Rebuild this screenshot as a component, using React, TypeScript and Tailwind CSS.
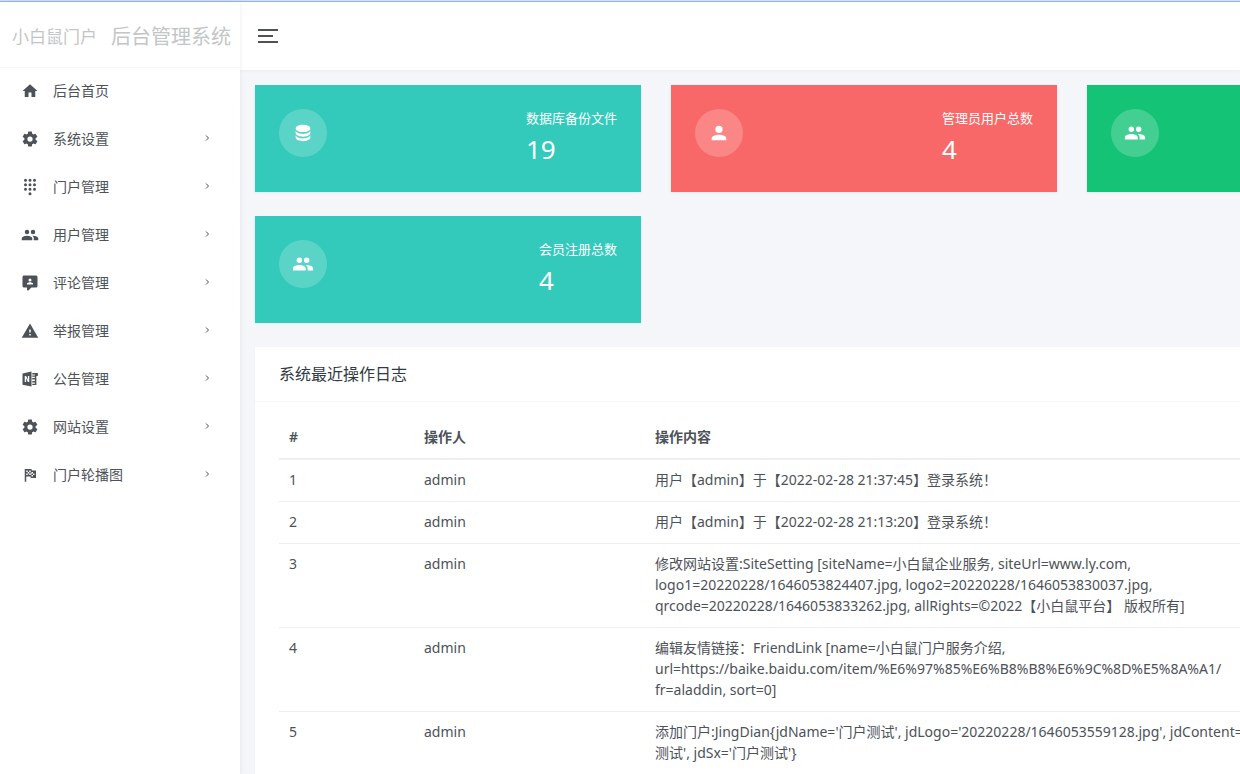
import type { ReactNode } from "react";

// Material Design icon shapes on a 24x24 grid
const icons = {
  home: "M10,20V14H14V20H19V12H22L12,3L2,12H5V20H10Z",
  settings:
    "M12,15.5A3.5,3.5 0 0,1 8.5,12A3.5,3.5 0 0,1 12,8.5A3.5,3.5 0 0,1 15.5,12A3.5,3.5 0 0,1 12,15.5M19.43,12.97C19.47,12.65 19.5,12.33 19.5,12C19.5,11.67 19.47,11.34 19.43,11L21.54,9.37C21.73,9.22 21.78,8.95 21.66,8.73L19.66,5.27C19.54,5.05 19.27,4.96 19.05,5.05L16.56,6.05C16.04,5.66 15.5,5.32 14.87,5.07L14.5,2.42C14.46,2.18 14.25,2 14,2H10C9.75,2 9.54,2.18 9.5,2.42L9.13,5.07C8.5,5.32 7.96,5.66 7.44,6.05L4.95,5.05C4.73,4.96 4.46,5.05 4.34,5.27L2.34,8.73C2.21,8.95 2.27,9.22 2.46,9.37L4.57,11C4.53,11.34 4.5,11.67 4.5,12C4.5,12.33 4.53,12.65 4.57,12.97L2.46,14.63C2.27,14.78 2.21,15.05 2.34,15.27L4.34,18.73C4.46,18.95 4.73,19.03 4.95,18.95L7.44,17.94C7.96,18.34 8.5,18.68 9.13,18.93L9.5,21.58C9.54,21.82 9.75,22 10,22H14C14.25,22 14.46,21.82 14.5,21.58L14.87,18.93C15.5,18.67 16.04,18.34 16.56,17.94L19.05,18.95C19.27,19.03 19.54,18.95 19.66,18.73L21.66,15.27C21.78,15.05 21.73,14.78 21.54,14.63L19.43,12.97Z",
  dialpad:
    "M12,19A2,2 0 0,0 10,21A2,2 0 0,0 12,23A2,2 0 0,0 14,21A2,2 0 0,0 12,19M6,1A2,2 0 0,0 4,3A2,2 0 0,0 6,5A2,2 0 0,0 8,3A2,2 0 0,0 6,1M6,7A2,2 0 0,0 4,9A2,2 0 0,0 6,11A2,2 0 0,0 8,9A2,2 0 0,0 6,7M6,13A2,2 0 0,0 4,15A2,2 0 0,0 6,17A2,2 0 0,0 8,15A2,2 0 0,0 6,13M18,5A2,2 0 0,0 20,3A2,2 0 0,0 18,1A2,2 0 0,0 16,3A2,2 0 0,0 18,5M12,13A2,2 0 0,0 10,15A2,2 0 0,0 12,17A2,2 0 0,0 14,15A2,2 0 0,0 12,13M18,13A2,2 0 0,0 16,15A2,2 0 0,0 18,17A2,2 0 0,0 20,15A2,2 0 0,0 18,13M18,7A2,2 0 0,0 16,9A2,2 0 0,0 18,11A2,2 0 0,0 20,9A2,2 0 0,0 18,7M12,7A2,2 0 0,0 10,9A2,2 0 0,0 12,11A2,2 0 0,0 14,9A2,2 0 0,0 12,7M12,1A2,2 0 0,0 10,3A2,2 0 0,0 12,5A2,2 0 0,0 14,3A2,2 0 0,0 12,1Z",
  users:
    "M16,13C15.71,13 15.38,13 15.03,13.05C16.19,13.89 17,15 17,16.5V19H23V16.5C23,14.17 18.33,13 16,13M8,13C5.67,13 1,14.17 1,16.5V19H15V16.5C15,14.17 10.33,13 8,13M8,11A3,3 0 0,0 11,8A3,3 0 0,0 8,5A3,3 0 0,0 5,8A3,3 0 0,0 8,11M16,11A3,3 0 0,0 19,8A3,3 0 0,0 16,5A3,3 0 0,0 13,8A3,3 0 0,0 16,11Z",
  user: "M12,4A4,4 0 0,1 16,8A4,4 0 0,1 12,12A4,4 0 0,1 8,8A4,4 0 0,1 12,4M12,14C16.42,14 20,15.79 20,18V20H4V18C4,15.79 7.58,14 12,14Z",
  comment:
    "M9,22A1,1 0 0,1 8,21V18H4A2,2 0 0,1 2,16V4C2,2.89 2.9,2 4,2H20A2,2 0 0,1 22,4V16A2,2 0 0,1 20,18H13.9L10.2,21.71C10,21.9 9.75,22 9.5,22H9M16,14V13C16,11.67 13.33,11 12,11C10.67,11 8,11.67 8,13V14H16M12,6A2,2 0 0,0 10,8A2,2 0 0,0 12,10A2,2 0 0,0 14,8A2,2 0 0,0 12,6Z",
  alert: "M13,14H11V10H13M13,18H11V16H13M1,21H23L12,2L1,21Z",
  notebook:
    "M2,4.5L14,2V22L2,19.5V4.5M5,8V16H6.8V11L9.2,16H11V8H9.2V13L6.8,8H5M15,4H22.5V8H20.5V20H15V18.2H18.5V16.5H15V14.5H18.5V12.8H15V10.8H18.5V9H15V7.2H18.5V6H15V4Z",
  flag: "M14.4,6H20V16H13L12.6,14H7V21H5V4H14L14.4,6M14,14H16V12H18V10H16V8H14V10L13,8V6H11V8H9V6H7V8H9V10H7V12H9V10H11V12H13V10L14,12V14M11,10V8H13V10H11M14,10H16V12H14V10Z",
  database:
    "M12,3C7.58,3 4,4.79 4,7C4,9.21 7.58,11 12,11C16.42,11 20,9.21 20,7C20,4.79 16.42,3 12,3M4,9V12C4,14.21 7.58,16 12,16C16.42,16 20,14.21 20,12V9C20,11.21 16.42,13 12,13C7.58,13 4,11.21 4,9M4,14V17C4,19.21 7.58,21 12,21C16.42,21 20,19.21 20,17V14C20,16.21 16.42,18 12,18C7.58,18 4,16.21 4,14Z",
};

type IconName = keyof typeof icons;

function Icon({ name, className }: { name: IconName; className: string }) {
  return (
    <svg viewBox="0 0 24 24" fill="currentColor" fillRule="evenodd" className={className} aria-hidden="true">
      <path d={icons[name]} />
    </svg>
  );
}

const menu: { icon: IconName; label: string; sub?: boolean }[] = [
  { icon: "home", label: "后台首页" },
  { icon: "settings", label: "系统设置", sub: true },
  { icon: "dialpad", label: "门户管理", sub: true },
  { icon: "users", label: "用户管理", sub: true },
  { icon: "comment", label: "评论管理", sub: true },
  { icon: "alert", label: "举报管理", sub: true },
  { icon: "notebook", label: "公告管理", sub: true },
  { icon: "settings", label: "网站设置", sub: true },
  { icon: "flag", label: "门户轮播图", sub: true },
];

const logs = [
  "用户【admin】于【2022-02-28 21:37:45】登录系统！",
  "用户【admin】于【2022-02-28 21:13:20】登录系统！",
  "修改网站设置:SiteSetting [siteName=小白鼠企业服务, siteUrl=www.ly.com,\nlogo1=20220228/1646053824407.jpg, logo2=20220228/1646053830037.jpg,\nqrcode=20220228/1646053833262.jpg, allRights=©2022【小白鼠平台】 版权所有]",
  "编辑友情链接：FriendLink [name=小白鼠门户服务介绍,\nurl=https://baike.baidu.com/item/%E6%97%85%E6%B8%B8%E6%9C%8D%E5%8A%A1/\nfr=aladdin, sort=0]",
  "添加门户:JingDian{jdName='门户测试', jdLogo='20220228/1646053559128.jpg', jdContent='门户\n测试', jdSx='门户测试'}",
];

function Sidebar() {
  return (
    <aside className="relative z-10 w-60 shrink-0 bg-white shadow-[0_1px_5px_rgba(0,0,0,0.08)]">
      <a
        href="#"
        className="flex h-[66px] items-center gap-3.5 border-b border-[#f8f8f8] pt-1 pl-3 whitespace-nowrap text-[#c3c6c6]"
      >
        <span className="text-[17px]">小白鼠门户</span>
        <span className="text-xl">后台管理系统</span>
      </a>
      <nav>
        <ul>
          {menu.map((item) => (
            <li key={item.label}>
              <a href="#" className="flex h-12 items-center pr-7 pb-0.5 pl-[21px] text-sm text-[#4d5259]">
                <Icon name={item.icon} className="mr-3.5 size-[18px]" />
                <span className="flex-1">{item.label}</span>
                {item.sub && (
                  <svg viewBox="0 0 10 10" className="mb-0.5 size-2.5" fill="none" stroke="currentColor" aria-hidden="true">
                    <path d="M4 2.5 L6.5 5 L4 7.5" />
                  </svg>
                )}
              </a>
            </li>
          ))}
        </ul>
      </nav>
    </aside>
  );
}

interface StatCardProps {
  icon: IconName;
  color: string;
  children?: ReactNode;
}

function StatCard({ icon, color, children }: StatCardProps) {
  return (
    <div className={`flex h-[107px] justify-between p-6 text-white shadow-[0_1px_3px_rgba(0,0,0,0.05)] ${color}`}>
      <span className="flex size-12 items-center justify-center rounded-full bg-white/20">
        <Icon name={icon} className="size-[22px]" />
      </span>
      {children}
    </div>
  );
}

function Stat({ label, value }: { label: string; value: number }) {
  return (
    <div>
      <p className="text-[13px] leading-[18px]">{label}</p>
      <p className="text-[26px] leading-[44px]">{value}</p>
    </div>
  );
}

function LogTable() {
  return (
    <section className="bg-white shadow-[0_1px_3px_rgba(0,0,0,0.04)]">
      <header className="flex h-[55px] items-center border-b border-[#f4f5f5] px-6">
        <h4 className="text-base text-[#313944]">系统最近操作日志</h4>
      </header>
      <div className="px-6 pt-3.5 pb-6">
        <table className="w-full table-fixed text-left text-sm leading-[21px]">
          <thead>
            <tr className="h-[43px] border-b-2 border-[#eceeef]">
              <th className="w-[135px] px-2.5 pb-0.5 font-semibold">#</th>
              <th className="w-[231px] px-2.5 pb-0.5 font-semibold">操作人</th>
              <th className="px-2.5 pb-0.5 font-semibold">操作内容</th>
            </tr>
          </thead>
          <tbody>
            {logs.map((text, i) => (
              <tr key={i} className="border-b border-[#eceeef] align-top">
                <td className="px-2.5 pt-[9px] pb-[11px]">{i + 1}</td>
                <td className="px-2.5 pt-[9px] pb-[11px]">admin</td>
                <td className="px-2.5 pt-[9px] pb-[11px] whitespace-pre">{text}</td>
              </tr>
            ))}
          </tbody>
        </table>
      </div>
    </section>
  );
}

export default function App() {
  return (
    <div className="flex h-screen flex-col overflow-hidden bg-[#f5f6fa] font-['Noto_Sans','Noto_Sans_CJK_SC',sans-serif] text-[#4d5259]">
      <div className="h-0.5 shrink-0 border-b border-[#9db3d3] bg-[#cfdff5]" />
      <div className="flex min-h-0 flex-1">
        <Sidebar />
        <div className="min-w-0 flex-1 overflow-hidden">
          <header className="flex h-[68px] items-center bg-white pl-[18px] shadow-[0_1px_5px_rgba(0,0,0,0.04)]">
            <button type="button" aria-label="切换菜单" className="flex flex-col gap-1">
              <span className="h-0.5 w-5 bg-[#4d5259]" />
              <span className="h-0.5 w-[15px] bg-[#4d5259]" />
              <span className="h-0.5 w-5 bg-[#4d5259]" />
            </button>
          </header>
          <main className="min-w-[1664px] px-[15px] pt-[15px]">
            <div className="mb-6 grid grid-cols-4 gap-x-[30px] gap-y-6">
              <StatCard icon="database" color="bg-[#33cabb]">
                <Stat label="数据库备份文件" value={19} />
              </StatCard>
              <StatCard icon="user" color="bg-[#f96868]">
                <Stat label="管理员用户总数" value={4} />
              </StatCard>
              <StatCard icon="users" color="bg-[#15c377]" />
              <div className="col-start-1">
                <StatCard icon="users" color="bg-[#33cabb]">
                  <Stat label="会员注册总数" value={4} />
                </StatCard>
              </div>
            </div>
            <LogTable />
          </main>
        </div>
      </div>
    </div>
  );
}
